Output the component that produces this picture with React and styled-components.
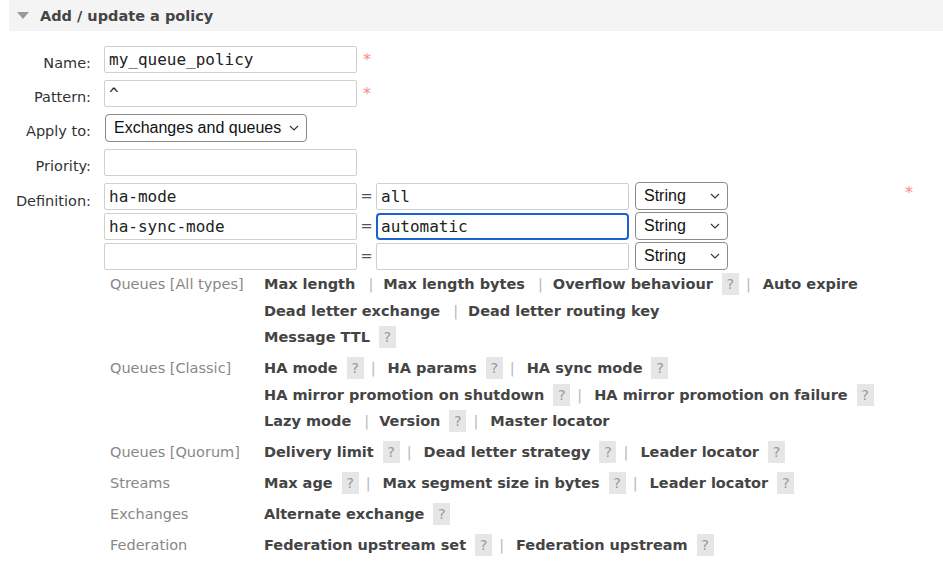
import React from 'react';
import styled, { createGlobalStyle } from 'styled-components';

const GlobalStyle = createGlobalStyle`
  html, body { margin: 0; padding: 0; background: #fff; }
  body {
    font-family: "DejaVu Sans", Verdana, sans-serif;
    font-size: 14.5px;
    color: #444;
  }
`;

const Page = styled.div`
  padding: 0 0 0 9px;
`;

const Header = styled.div`
  display: flex;
  align-items: center;
  gap: 11px;
  height: 31px;
  padding-left: 8px;
  background: #f4f4f4;
`;

const Title = styled.h2`
  margin: 0;
  font-size: 14.5px;
  font-weight: bold;
  color: #444;
`;

const Form = styled.div`
  display: flex;
  flex-direction: column;
  gap: 7px;
  margin-top: 15px;
`;

const FieldRow = styled.div`
  display: grid;
  grid-template-columns: 82px 1fr;
  column-gap: 13px;
  align-items: ${(p) => (p.$top ? 'start' : 'center')};
  margin-top: ${(p) => (p.$top ? '-1px' : '0')};
`;

const Label = styled.label`
  text-align: right;
  color: #333;
  padding-top: ${(p) => (p.$top ? '11px' : '6px')};
`;

const Control = styled.div`
  display: flex;
  align-items: center;
  gap: 6px;
`;

const TextInput = styled.input`
  box-sizing: border-box;
  width: 253px;
  height: 27px;
  margin: 0;
  padding: 0 ${(p) => (p.$focus ? '3px' : '4px')};
  border: ${(p) => (p.$focus ? '2px solid #1a62d0' : '1px solid #cfcfcf')};
  border-radius: ${(p) => (p.$focus ? '4px' : '2px')};
  font-family: "DejaVu Sans Mono", Menlo, monospace;
  font-size: 16px;
  color: #222;
  background: #fff;
  outline: none;
`;

const Star = styled.span`
  color: #f78b8b;
  font-size: 16px;
  line-height: 16px;
  ${(p) => p.$far && 'align-self: flex-start; margin: 3px 30px 0 auto;'}
`;

const SelectBox = styled.div`
  box-sizing: border-box;
  display: inline-flex;
  align-items: center;
  justify-content: space-between;
  width: ${(p) => p.$w}px;
  height: 28px;
  margin-left: ${(p) => p.$ml || 0}px;
  padding: 0 7px 0 8px;
  border: 1px solid #8a8a8a;
  border-radius: 4px;
  background: #fff;
  font-family: "Liberation Sans", Arial, sans-serif;
  font-size: 16px;
  color: #111;
`;

const DefBlock = styled.div`
  display: flex;
  flex-direction: column;
  gap: 2px;
`;

const DefRow = styled.div`
  display: flex;
  align-items: center;
`;

const Eq = styled.span`
  width: 19px;
  text-align: center;
  color: #555;
`;

const Help = styled.div`
  display: grid;
  grid-template-columns: 154px 1fr;
  row-gap: 4.5px;
  margin-top: 1px;
  padding-left: 101px;
`;

const Category = styled.div`
  color: #888;
  line-height: 26.5px;
`;

const Lines = styled.div`
  display: flex;
  flex-direction: column;
`;

const Line = styled.div`
  display: flex;
  align-items: center;
  height: 26.5px;
`;

const ArgLink = styled.span`
  font-weight: bold;
  color: #444;
  white-space: nowrap;
`;

const HelpIcon = styled.span`
  display: inline-flex;
  align-items: center;
  justify-content: center;
  width: 17px;
  height: 22px;
  margin-left: 9px;
  background: #e6e6e6;
  color: #9a9a9a;
`;

const Sep = styled.span`
  color: #b8b8b8;
  margin: ${(p) => (p.$afterHelp ? '0 12px 0 7px' : '0 10px 0 13px')};
`;

const Chevron = () => (
  <svg width="10" height="6" viewBox="0 0 10 6" fill="none">
    <path d="M1 1 L5 5 L9 1" stroke="#333" strokeWidth="1.1" />
  </svg>
);

const Triangle = () => (
  <svg width="12" height="7" viewBox="0 0 12 7">
    <path d="M0 0 H12 L6 7 Z" fill="#9a9a9a" />
  </svg>
);

const Select = ({ value, w, ml }) => (
  <SelectBox $w={w} $ml={ml}>
    <span>{value}</span>
    <Chevron />
  </SelectBox>
);

const groups = [
  {
    label: 'Queues [All types]',
    lines: [
      [['Max length'], ['Max length bytes'], ['Overflow behaviour', true], ['Auto expire']],
      [['Dead letter exchange'], ['Dead letter routing key']],
      [['Message TTL', true]],
    ],
  },
  {
    label: 'Queues [Classic]',
    lines: [
      [['HA mode', true], ['HA params', true], ['HA sync mode', true]],
      [['HA mirror promotion on shutdown', true], ['HA mirror promotion on failure', true]],
      [['Lazy mode'], ['Version', true], ['Master locator']],
    ],
  },
  {
    label: 'Queues [Quorum]',
    lines: [[['Delivery limit', true], ['Dead letter strategy', true], ['Leader locator', true]]],
  },
  {
    label: 'Streams',
    lines: [[['Max age', true], ['Max segment size in bytes', true], ['Leader locator', true]]],
  },
  {
    label: 'Exchanges',
    lines: [[['Alternate exchange', true]]],
  },
  {
    label: 'Federation',
    lines: [[['Federation upstream set', true], ['Federation upstream', true]]],
  },
];

const defs = [
  { key: 'ha-mode', value: 'all' },
  { key: 'ha-sync-mode', value: 'automatic', focus: true },
  { key: '', value: '' },
];

export default function App() {
  return (
    <>
      <GlobalStyle />
      <Page>
        <Header>
          <Triangle />
          <Title>Add / update a policy</Title>
        </Header>
        <Form>
          <FieldRow>
            <Label>Name:</Label>
            <Control>
              <TextInput readOnly value="my_queue_policy" />
              <Star>*</Star>
            </Control>
          </FieldRow>
          <FieldRow>
            <Label>Pattern:</Label>
            <Control>
              <TextInput readOnly value="^" />
              <Star>*</Star>
            </Control>
          </FieldRow>
          <FieldRow>
            <Label>Apply to:</Label>
            <Control>
              <Select value="Exchanges and queues" w={202} ml={1} />
            </Control>
          </FieldRow>
          <FieldRow>
            <Label>Priority:</Label>
            <Control>
              <TextInput readOnly value="" />
            </Control>
          </FieldRow>
          <FieldRow $top>
            <Label $top>Definition:</Label>
            <Control>
              <DefBlock>
                {defs.map((d, i) => (
                  <DefRow key={i}>
                    <TextInput readOnly value={d.key} />
                    <Eq>=</Eq>
                    <TextInput readOnly value={d.value} $focus={d.focus} />
                    <Select value="String" w={93} ml={6} />
                  </DefRow>
                ))}
              </DefBlock>
              <Star $far>*</Star>
            </Control>
          </FieldRow>
        </Form>
        <Help>
          {groups.map((g) => (
            <React.Fragment key={g.label}>
              <Category>{g.label}</Category>
              <Lines>
                {g.lines.map((line, li) => (
                  <Line key={li}>
                    {line.map(([text, help], ii) => (
                      <React.Fragment key={ii}>
                        {ii > 0 && <Sep $afterHelp={line[ii - 1][1]}>|</Sep>}
                        <ArgLink>{text}</ArgLink>
                        {help && <HelpIcon>?</HelpIcon>}
                      </React.Fragment>
                    ))}
                  </Line>
                ))}
              </Lines>
            </React.Fragment>
          ))}
        </Help>
      </Page>
    </>
  );
}
